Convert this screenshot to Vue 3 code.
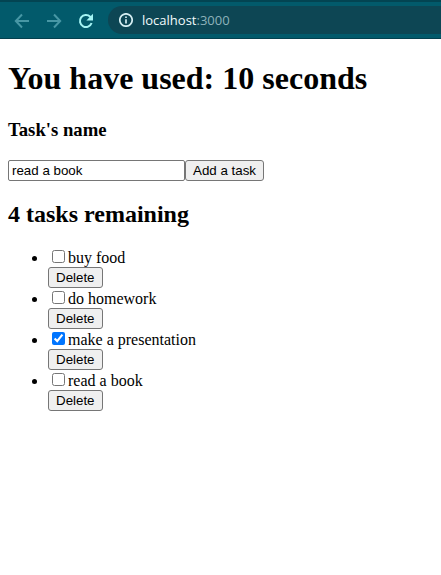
<script setup>
import { computed, ref } from 'vue'

const seconds = ref(10)
const name = ref('read a book')
const tasks = ref([
  { id: 1, name: 'buy food', done: false },
  { id: 2, name: 'do homework', done: false },
  { id: 3, name: 'make a presentation', done: true },
  { id: 4, name: 'read a book', done: false },
])
const remaining = computed(() => tasks.value.length)

let nextId = 5
function addTask() {
  if (!name.value.trim()) return
  tasks.value.push({ id: nextId++, name: name.value, done: false })
}
function removeTask(id) {
  tasks.value = tasks.value.filter((task) => task.id !== id)
}
</script>

<template>
  <header class="toolbar">
    <nav class="nav">
      <button class="nav-button" type="button" aria-label="Back" disabled>
        <svg viewBox="0 0 16 16" width="16" height="16"><path d="M15 8H2M8 1.5 1.8 8 8 14.5" /></svg>
      </button>
      <button class="nav-button" type="button" aria-label="Forward" disabled>
        <svg viewBox="0 0 16 16" width="16" height="16"><path d="M1 8h13M8 1.5 14.2 8 8 14.5" /></svg>
      </button>
      <button class="nav-button reload" type="button" aria-label="Reload">
        <svg viewBox="0 0 16 16" width="16" height="16">
          <path d="M13.6 10A6 6 0 1 1 12.2 3.8L13.4 5" />
          <path class="solid" d="M15 .8v6.6H8.4z" />
        </svg>
      </button>
    </nav>
    <div class="address">
      <svg class="info" viewBox="0 0 14 14" width="14" height="14">
        <circle cx="7" cy="7" r="6.2" />
        <path d="M7 6.2v4.2M7 3.4v1.7" />
      </svg>
      <span class="url">localhost<span class="port">:3000</span></span>
    </div>
  </header>

  <main class="page">
    <h1>You have used: {{ seconds }} seconds</h1>
    <form @submit.prevent="addTask">
      <h3><label for="task-name">Task's name</label></h3>
      <div class="entry">
        <input id="task-name" v-model="name" class="name" type="text" autocomplete="off" />
        <button class="action" type="submit">Add a task</button>
      </div>
    </form>
    <h2>{{ remaining }} tasks remaining</h2>
    <ul class="tasks">
      <li v-for="task in tasks" :key="task.id">
        <div class="task">
          <input :id="`task-${task.id}`" v-model="task.done" class="check" type="checkbox" />
          <label :for="`task-${task.id}`">{{ task.name }}</label>
        </div>
        <div class="controls">
          <button class="action" type="button" @click="removeTask(task.id)">Delete</button>
        </div>
      </li>
    </ul>
  </main>
</template>

<style>
body {
  margin: 0;
  background: #fff;
}
</style>

<style scoped>
.toolbar {
  box-sizing: border-box;
  display: flex;
  align-items: center;
  gap: 12px;
  height: 39px;
  padding: 2px 0 0 14px;
  border-top: 2px solid #034452;
  border-bottom: 1px solid #04404e;
  background: #025a6b;
}
.nav {
  display: flex;
  gap: 16px;
}
.nav-button {
  display: flex;
  padding: 0;
  border: 0;
  background: none;
  color: #4797a5;
}
.nav-button.reload {
  color: #a5f4f4;
}
.nav-button svg {
  fill: none;
  stroke: currentColor;
  stroke-width: 2;
}
.reload .solid {
  fill: currentColor;
  stroke: none;
}
.address {
  box-sizing: border-box;
  flex: 1;
  display: flex;
  align-items: center;
  gap: 9px;
  height: 28px;
  margin: 0 0 2px 2px;
  padding-left: 11px;
  border-radius: 14px 0 0 14px;
  background: #0d4654;
}
.info {
  fill: none;
  stroke: #d5eef2;
  stroke-width: 1.7;
}
.url {
  font: 13px/20px "Open Sans", "Noto Sans", sans-serif;
  color: #f2fbfc;
}
.port {
  color: #8db2ba;
}
.page {
  padding: 0 8px;
  font-family: "Liberation Serif", serif;
  font-size: 16px;
  color: #000;
}
h1 {
  margin: 0;
  padding: 21px 0;
  font-size: 32px;
  line-height: 37px;
}
h3 {
  margin: 0 0 18px;
  line-height: 24px;
}
h2 {
  margin: 20px 0 19px;
  font-size: 24px;
  line-height: 27px;
}
.entry {
  display: flex;
}
.name,
.action {
  box-sizing: border-box;
  height: 21px;
  font-family: "Liberation Sans", sans-serif;
  color: #000;
}
.name {
  width: 177px;
  padding: 1px 3px;
  border: 1px solid #767676;
  border-radius: 2px;
}
.action {
  padding: 0 7px;
  border: 1px solid #767676;
  border-radius: 3px;
  background: #efefef;
}
.tasks {
  margin: 0;
  padding-left: 40px;
}
.task {
  height: 20px;
  line-height: 20px;
}
.check {
  width: 13px;
  height: 13px;
  margin: 3px 3px 3px 4px;
}
.controls {
  display: flex;
}
</style>
